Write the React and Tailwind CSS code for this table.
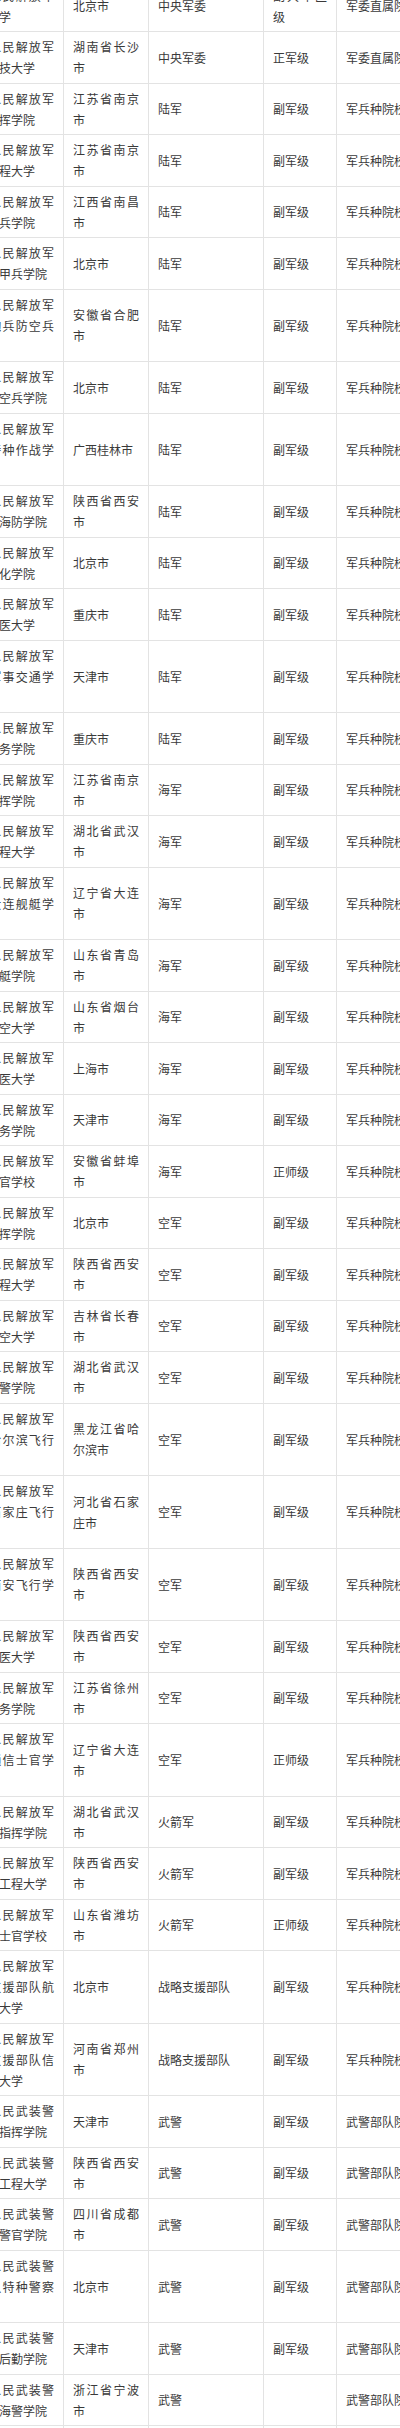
import React from "react";

const rows = [
  ["中国人民解放军国防大学", "北京市", "中央军委", "副大军区级", "军委直属院校"],
  ["中国人民解放军国防科技大学", "湖南省长沙市", "中央军委", "正军级", "军委直属院校"],
  ["中国人民解放军陆军指挥学院", "江苏省南京市", "陆军", "副军级", "军兵种院校"],
  ["中国人民解放军陆军工程大学", "江苏省南京市", "陆军", "副军级", "军兵种院校"],
  ["中国人民解放军陆军步兵学院", "江西省南昌市", "陆军", "副军级", "军兵种院校"],
  ["中国人民解放军陆军装甲兵学院", "北京市", "陆军", "副军级", "军兵种院校"],
  ["中国人民解放军陆军炮兵防空兵学院", "安徽省合肥市", "陆军", "副军级", "军兵种院校"],
  ["中国人民解放军陆军防空兵学院", "北京市", "陆军", "副军级", "军兵种院校"],
  ["中国人民解放军陆军特种作战学院", "广西桂林市", "陆军", "副军级", "军兵种院校"],
  ["中国人民解放军陆军边海防学院", "陕西省西安市", "陆军", "副军级", "军兵种院校"],
  ["中国人民解放军陆军防化学院", "北京市", "陆军", "副军级", "军兵种院校"],
  ["中国人民解放军陆军军医大学", "重庆市", "陆军", "副军级", "军兵种院校"],
  ["中国人民解放军陆军军事交通学院", "天津市", "陆军", "副军级", "军兵种院校"],
  ["中国人民解放军陆军勤务学院", "重庆市", "陆军", "副军级", "军兵种院校"],
  ["中国人民解放军海军指挥学院", "江苏省南京市", "海军", "副军级", "军兵种院校"],
  ["中国人民解放军海军工程大学", "湖北省武汉市", "海军", "副军级", "军兵种院校"],
  ["中国人民解放军海军大连舰艇学院", "辽宁省大连市", "海军", "副军级", "军兵种院校"],
  ["中国人民解放军海军潜艇学院", "山东省青岛市", "海军", "副军级", "军兵种院校"],
  ["中国人民解放军海军航空大学", "山东省烟台市", "海军", "副军级", "军兵种院校"],
  ["中国人民解放军海军军医大学", "上海市", "海军", "副军级", "军兵种院校"],
  ["中国人民解放军海军勤务学院", "天津市", "海军", "副军级", "军兵种院校"],
  ["中国人民解放军海军士官学校", "安徽省蚌埠市", "海军", "正师级", "军兵种院校"],
  ["中国人民解放军空军指挥学院", "北京市", "空军", "副军级", "军兵种院校"],
  ["中国人民解放军空军工程大学", "陕西省西安市", "空军", "副军级", "军兵种院校"],
  ["中国人民解放军空军航空大学", "吉林省长春市", "空军", "副军级", "军兵种院校"],
  ["中国人民解放军空军预警学院", "湖北省武汉市", "空军", "副军级", "军兵种院校"],
  ["中国人民解放军空军哈尔滨飞行学院", "黑龙江省哈尔滨市", "空军", "副军级", "军兵种院校"],
  ["中国人民解放军空军石家庄飞行学院", "河北省石家庄市", "空军", "副军级", "军兵种院校"],
  ["中国人民解放军空军西安飞行学院", "陕西省西安市", "空军", "副军级", "军兵种院校"],
  ["中国人民解放军空军军医大学", "陕西省西安市", "空军", "副军级", "军兵种院校"],
  ["中国人民解放军空军勤务学院", "江苏省徐州市", "空军", "副军级", "军兵种院校"],
  ["中国人民解放军空军通信士官学校", "辽宁省大连市", "空军", "正师级", "军兵种院校"],
  ["中国人民解放军火箭军指挥学院", "湖北省武汉市", "火箭军", "副军级", "军兵种院校"],
  ["中国人民解放军火箭军工程大学", "陕西省西安市", "火箭军", "副军级", "军兵种院校"],
  ["中国人民解放军火箭军士官学校", "山东省潍坊市", "火箭军", "正师级", "军兵种院校"],
  ["中国人民解放军战略支援部队航天工程大学", "北京市", "战略支援部队", "副军级", "军兵种院校"],
  ["中国人民解放军战略支援部队信息工程大学", "河南省郑州市", "战略支援部队", "副军级", "军兵种院校"],
  ["中国人民武装警察部队指挥学院", "天津市", "武警", "副军级", "武警部队院校"],
  ["中国人民武装警察部队工程大学", "陕西省西安市", "武警", "副军级", "武警部队院校"],
  ["中国人民武装警察部队警官学院", "四川省成都市", "武警", "副军级", "武警部队院校"],
  ["中国人民武装警察部队特种警察学院", "北京市", "武警", "副军级", "武警部队院校"],
  ["中国人民武装警察部队后勤学院", "天津市", "武警", "副军级", "武警部队院校"],
  ["中国人民武装警察部队海警学院", "浙江省宁波市", "武警", "", "武警部队院校"],
  ["中国人民武装警察部队士官学校", "浙江省杭州市", "武警", "正师级", "武警部队院校"],
];

const cell =
  "border-r border-b border-[#e3e3e3] px-[9px] py-[4.25px] align-middle text-justify";

export default function App() {
  return (
    <div className="w-[400px] h-[2428px] overflow-hidden bg-white">
      <table className="table-fixed border-separate border-spacing-0 w-[502px] ml-[-46px] mt-[-19.5px] text-[12px] leading-[21px] text-[#3a3a3a] font-['Noto_Sans_CJK_SC','Noto_Sans',sans-serif]">
        <colgroup>
          <col className="w-[110px]" />
          <col className="w-[85px]" />
          <col className="w-[115px]" />
          <col className="w-[73px]" />
          <col className="w-[119px]" />
        </colgroup>
        <tbody>
          {rows.map((r, i) => (
            <tr key={i}>
              {r.map((c, j) => (
                <td key={j} className={cell}>
                  {c}
                </td>
              ))}
            </tr>
          ))}
        </tbody>
      </table>
    </div>
  );
}
